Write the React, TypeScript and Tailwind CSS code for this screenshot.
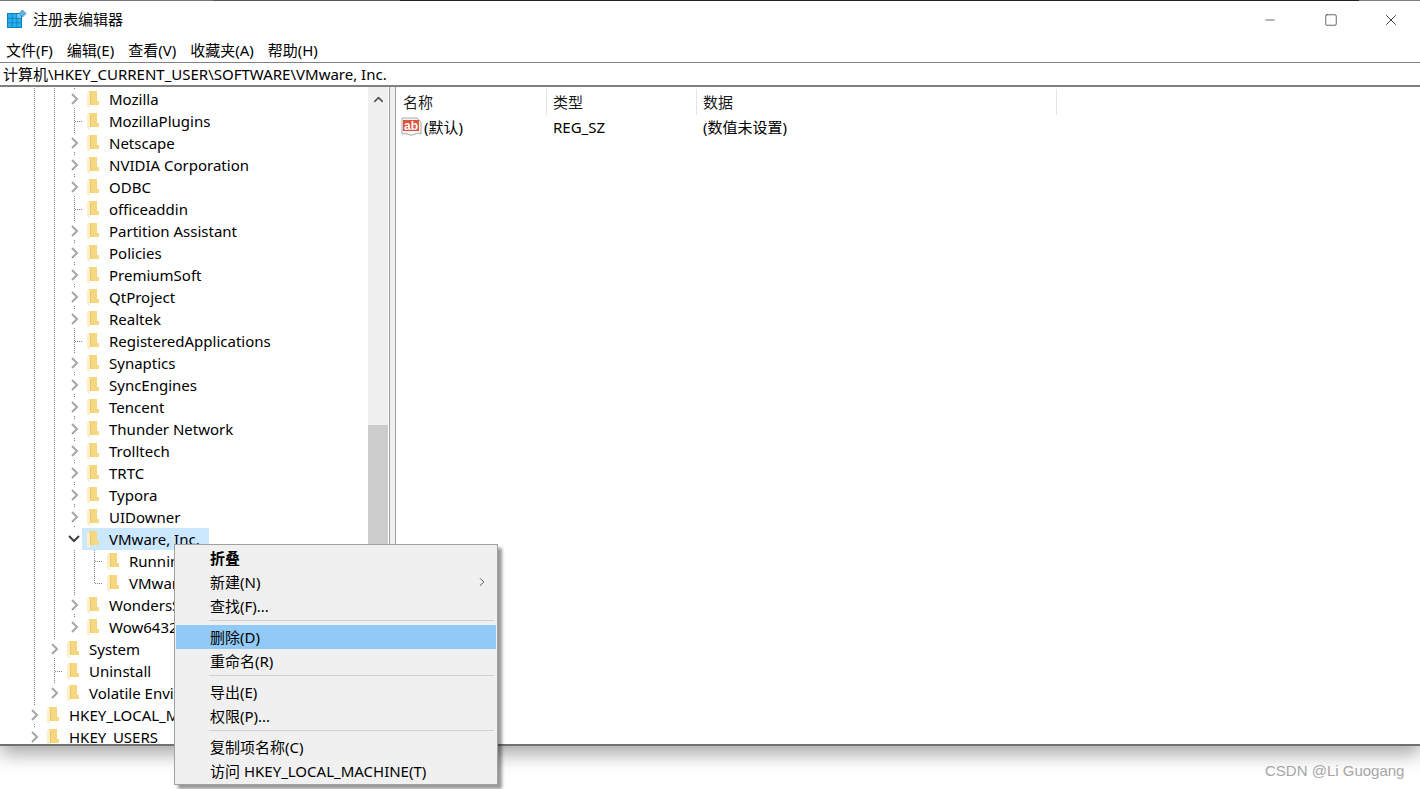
import { Minus, Square, X, ChevronUp, ChevronRight } from "lucide-react";

type TreeRow = {
  label: string;
  depth: number;
  kind: "closed" | "open" | "leaf" | "corner";
  lastSibling?: boolean;
};

const rows: TreeRow[] = [
  { label: "Mozilla", depth: 3, kind: "closed" },
  { label: "MozillaPlugins", depth: 3, kind: "leaf" },
  { label: "Netscape", depth: 3, kind: "closed" },
  { label: "NVIDIA Corporation", depth: 3, kind: "closed" },
  { label: "ODBC", depth: 3, kind: "closed" },
  { label: "officeaddin", depth: 3, kind: "leaf" },
  { label: "Partition Assistant", depth: 3, kind: "closed" },
  { label: "Policies", depth: 3, kind: "closed" },
  { label: "PremiumSoft", depth: 3, kind: "closed" },
  { label: "QtProject", depth: 3, kind: "closed" },
  { label: "Realtek", depth: 3, kind: "closed" },
  { label: "RegisteredApplications", depth: 3, kind: "leaf" },
  { label: "Synaptics", depth: 3, kind: "closed" },
  { label: "SyncEngines", depth: 3, kind: "closed" },
  { label: "Tencent", depth: 3, kind: "closed" },
  { label: "Thunder Network", depth: 3, kind: "closed" },
  { label: "Trolltech", depth: 3, kind: "closed" },
  { label: "TRTC", depth: 3, kind: "closed" },
  { label: "Typora", depth: 3, kind: "closed" },
  { label: "UIDowner", depth: 3, kind: "closed" },
  { label: "VMware, Inc.", depth: 3, kind: "open" },
  { label: "Running", depth: 4, kind: "leaf" },
  { label: "VMware", depth: 4, kind: "corner" },
  { label: "WondersShare", depth: 3, kind: "closed" },
  { label: "Wow6432Node", depth: 3, kind: "closed", lastSibling: true },
  { label: "System", depth: 2, kind: "closed" },
  { label: "Uninstall", depth: 2, kind: "leaf" },
  { label: "Volatile Environment", depth: 2, kind: "closed", lastSibling: true },
  { label: "HKEY_LOCAL_MACHINE", depth: 1, kind: "closed" },
  { label: "HKEY_USERS", depth: 1, kind: "closed" },
];

const menuGroups = [
  [
    { label: "折叠", bold: true },
    { label: "新建(N)", submenu: true },
    { label: "查找(F)..." },
  ],
  [{ label: "删除(D)", active: true }, { label: "重命名(R)" }],
  [{ label: "导出(E)" }, { label: "权限(P)..." }],
  [{ label: "复制项名称(C)" }, { label: "访问 HKEY_LOCAL_MACHINE(T)" }],
];

const menus = ["文件(F)", "编辑(E)", "查看(V)", "收藏夹(A)", "帮助(H)"];

const AppIcon = () => (
  <svg width="20" height="20" viewBox="0 0 20 20" className="shrink-0">
    <rect x="0" y="3" width="15" height="15" fill="#0b7fc4" />
    {[0, 1, 2].map((r) =>
      [0, 1, 2].map((c) => (
        <rect key={`${r}-${c}`} x={1 + c * 4.6} y={4 + r * 4.6} width="3.8" height="3.8" fill={r === 0 && c === 2 ? "#7ccaf0" : "#29aee8"} />
      ))
    )}
    <path d="M15.5 0 L19 3.5 L15.5 7 L12 3.5 Z" fill="#5fb4dc" stroke="#2f86b8" strokeWidth="0.7" />
  </svg>
);

const Folder = () => (
  <svg width="12" height="17" viewBox="0 0 12 17" className="shrink-0">
    <path d="M2 0 H10 V10 H12 V14 H2 Z" fill="#f6d67f" />
    <path d="M0 1 L3 2 V17 L0 15 Z" fill="#fdf0c6" />
    <path d="M3 2 H4 V14 H3 Z" fill="#e9c56c" />
  </svg>
);

const AbIcon = () => (
  <svg width="22" height="20" viewBox="0 0 22 20" className="shrink-0">
    <path d="M1 1 H16 L20 5 V17 C15 15 13 19 9 18 C6 17 4 16 1 17 Z" fill="#f4f4f4" stroke="#a8a8a8" />
    <rect x="2" y="3" width="16" height="11" fill="#e0533a" />
    <text x="10" y="12.5" textAnchor="middle" fontSize="12" fontWeight="700" fill="#ffffff" fontFamily="'Liberation Sans', sans-serif">
      ab
    </text>
  </svg>
);

// one 20x22 indent cell: dotted guide plus the expander or connector
const TreeCell = ({ kind, lastSibling }: { kind: string; lastSibling?: boolean }) => (
  <svg width="20" height="22" viewBox="0 0 20 22" className="shrink-0" fill="none">
    {kind === "line" && <path d="M10.5 0 V22" stroke="#808080" strokeDasharray="1 1" />}
    {kind === "leaf" && <path d="M10.5 0 V22 M11 11.5 H19" stroke="#808080" strokeDasharray="1 1" />}
    {kind === "corner" && <path d="M10.5 0 V11 M11 11.5 H19" stroke="#808080" strokeDasharray="1 1" />}
    {kind === "closed" && (
      <>
        <path d={lastSibling ? "M10.5 0 V2" : "M10.5 0 V2 M10.5 20 V22"} stroke="#808080" strokeDasharray="1 1" />
        <path d="M8 6 L13 11 L8 16" stroke="#a6a6a6" strokeWidth="2" />
      </>
    )}
    {kind === "open" && <path d="M5 8 L10 13 L15 8" stroke="#404040" strokeWidth="2" />}
  </svg>
);

export default function App() {
  return (
    <div className="relative h-[789px] w-[1420px] overflow-hidden bg-white font-['Noto_Sans','Noto_Sans_CJK_SC',sans-serif] text-[15px] text-black">
      <div className="flex h-[746px] flex-col border-b-2 border-[#6f7274] bg-white shadow-[0_8px_18px_rgba(0,0,0,0.35)]">
        <div className="flex h-px shrink-0">
          <div className="w-[213px] bg-[#777777]" />
          <div className="w-[187px] bg-[#555555]" />
          <div className="w-[959px] bg-[#222222]" />
          <div className="flex-1 bg-[#808080]" />
        </div>

        <div className="flex h-[37px] shrink-0 items-center pl-[7px]">
          <AppIcon />
          <span className="ml-[6px] leading-none">注册表编辑器</span>
          <div className="ml-auto flex items-center text-black">
            <Minus size={14} strokeWidth={1} className="mr-[47px]" />
            <Square size={14} strokeWidth={1} className="mr-[44px]" />
            <X size={18} strokeWidth={1} className="mr-[20px]" />
          </div>
        </div>

        <div className="flex h-[25px] shrink-0 items-center gap-[14px] border-b border-[#808080] pl-[6px]">
          {menus.map((m) => (
            <span key={m} className="leading-none">
              {m}
            </span>
          ))}
        </div>

        <div className="flex h-[24px] shrink-0 items-center border-b-2 border-[#808080] pl-[3px] leading-none">
          计算机\HKEY_CURRENT_USER\SOFTWARE\VMware, Inc.
        </div>

        <div className="flex min-h-0 flex-1">
          <div className="min-w-0 w-[368px] overflow-hidden pt-px">
            {rows.map((row) => (
              <div key={row.label} className="flex h-[22px] items-center pl-[24px]">
                {Array.from({ length: row.depth - 1 }).map((_, i) => (
                  <TreeCell key={i} kind="line" />
                ))}
                <TreeCell kind={row.kind} lastSibling={row.lastSibling} />
                <div
                  className={
                    row.kind === "open"
                      ? "-ml-0.5 flex h-[22px] items-center bg-[#cce8ff] pl-[5px] pr-[9px]"
                      : "-ml-0.5 flex h-[22px] items-center pl-[5px]"
                  }
                >
                  <Folder />
                  <span className="ml-[10px] whitespace-nowrap leading-none">{row.label}</span>
                </div>
              </div>
            ))}
          </div>

          <div className="flex w-[20px] shrink-0 flex-col bg-[#f0f0f0]">
            <div className="flex h-[24px] items-center justify-center pt-px">
              <ChevronUp size={15} strokeWidth={2.5} className="text-[#505050]" />
            </div>
            <div className="h-[314px]" />
            <div className="flex-1 bg-[#cdcdcd]" />
          </div>

          <div className="ml-px w-[7px] shrink-0 border-x border-[#a0a0a0] bg-[#f0f0f0]" />

          <div className="min-w-0 flex-1 pt-[2px]">
            <div className="flex h-[26px] items-center leading-none text-[#1a1a1a]">
              <span className="flex h-full w-[151px] items-center border-r border-[#e5e5e5] pl-[7px]">名称</span>
              <span className="flex h-full w-[150px] items-center border-r border-[#e5e5e5] pl-[6px]">类型</span>
              <span className="flex h-full w-[360px] items-center border-r border-[#e5e5e5] pl-[6px]">数据</span>
            </div>
            <div className="flex h-[24px] items-center leading-none">
              <span className="flex w-[151px] items-center pl-[5px]">
                <AbIcon />
                <span className="ml-px">(默认)</span>
              </span>
              <span className="w-[150px] pl-[6px]">REG_SZ</span>
              <span className="pl-[6px]">(数值未设置)</span>
            </div>
          </div>
        </div>
      </div>

      <div className="absolute left-[174px] top-[544px] flex h-[241px] w-[324px] flex-col border border-[#a0a0a0] bg-[#f0f0f0] p-px shadow-[4px_4px_3px_rgba(0,0,0,0.4)]">
        {menuGroups.map((group, g) => (
          <div key={g}>
            {g > 0 && (
              <div className="flex h-[7px] items-start pl-[33px] pr-[2px] pt-[2px]">
                <div className="h-px w-full bg-[#d0d0d0]" />
              </div>
            )}
            {group.map((item) => (
              <div
                key={item.label}
                className={
                  item.active
                    ? "flex h-6 items-center bg-[#91c9f7] pl-[34px] leading-none"
                    : "flex h-6 items-center pl-[34px] leading-none"
                }
              >
                <span className={item.bold ? "font-bold" : ""}>{item.label}</span>
                {item.submenu && <ChevronRight size={14} strokeWidth={1.5} className="ml-auto mr-[7px] text-[#404040]" />}
              </div>
            ))}
          </div>
        ))}
      </div>

      <span className="absolute left-[1265px] top-[762px] font-['Liberation_Sans',sans-serif] text-[15px] leading-[18px] text-[#a6a6a6]">
        CSDN @Li Guogang
      </span>
    </div>
  );
}
